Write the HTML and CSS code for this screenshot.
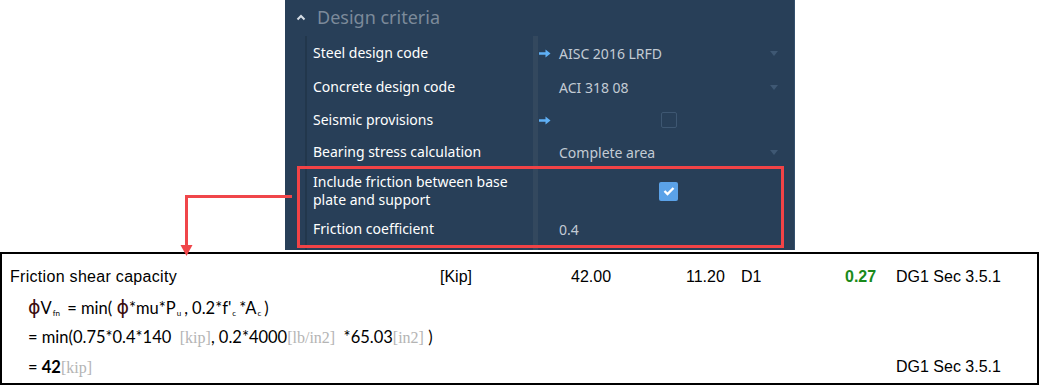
FILE: index.html
```html
<!DOCTYPE html>
<html>
<head>
<meta charset="utf-8">
<link rel="stylesheet" href="styles.css">
</head>
<body>
<div class="page">
  <section class="panel">
    <div class="panel-head">
      <svg class="chev" width="10" height="7" viewBox="0 0 10 7"><path d="M1.5 5.5 L5 2 L8.5 5.5" fill="none" stroke="#d6dde5" stroke-width="2"/></svg>
      <span class="panel-title">Design criteria</span>
    </div>
    <div class="props">
      <div class="label">Steel design code</div>
      <div class="value"><span class="slot"><svg class="arrow" width="12" height="9" viewBox="0 0 12 9"><path d="M0 3.2 H6.5 V0.5 L11.5 4.5 L6.5 8.5 V5.8 H0 Z" fill="#5fb0f5"/></svg></span><span class="vtext">AISC 2016 LRFD</span><span class="caret"></span></div>

      <div class="label">Concrete design code</div>
      <div class="value"><span class="slot"></span><span class="vtext">ACI 318 08</span><span class="caret"></span></div>

      <div class="label">Seismic provisions</div>
      <div class="value"><span class="slot"><svg class="arrow" width="12" height="9" viewBox="0 0 12 9"><path d="M0 3.2 H6.5 V0.5 L11.5 4.5 L6.5 8.5 V5.8 H0 Z" fill="#5fb0f5"/></svg></span><span class="checkwrap"><span class="check"></span></span></div>

      <div class="label">Bearing stress calculation</div>
      <div class="value"><span class="slot"></span><span class="vtext">Complete area</span><span class="caret"></span></div>

      <div class="label two">Include friction between base<br>plate and support</div>
      <div class="value"><span class="slot"></span><span class="checkwrap"><span class="check on"><svg width="12" height="10" viewBox="0 0 12 10"><path d="M1.5 5 L4.5 8 L10.5 2" fill="none" stroke="#fff" stroke-width="2.4"/></svg></span></span></div>

      <div class="label">Friction coefficient</div>
      <div class="value"><span class="slot"></span><span class="vtext">0.4</span></div>
    </div>
  </section>

  <div class="highlight"></div>
  <svg class="connector" width="120" height="70" viewBox="0 0 120 70">
    <path d="M113 6.5 H7.5 V58" fill="none" stroke="#f0464a" stroke-width="3"/>
    <path d="M1.5 55 H13.5 L7.5 66 Z" fill="#f0464a"/>
  </svg>

  <section class="report">
    <div class="rrow">
      <span class="wide">Friction shear capacity</span>
      <span>[Kip]</span>
      <span>42.00</span>
      <span>11.20</span>
      <span>D1</span>
      <span class="ratio">0.27</span>
      <span>DG1 Sec 3.5.1</span>
    </div>
    <div class="rrow">
      <span class="formula"><span class="phi">ϕ</span>V<sub>fn</sub> = min( <span class="phi">ϕ</span>*mu*P<sub>u</sub>, 0.2*f'<sub>c</sub>*A<sub>c</sub>)</span>
    </div>
    <div class="rrow">
      <span class="formula">= min(0.75*0.4*140 &nbsp;<span class="unit">[kip]</span>, 0.2*4000<span class="unit">[lb/in2]</span> &nbsp;*65.03<span class="unit">[in2]</span> )</span>
    </div>
    <div class="rrow">
      <span class="formula">= <b>42</b><span class="unit">[kip]</span></span>
      <span class="ref">DG1 Sec 3.5.1</span>
    </div>
  </section>
</div>
</body>
</html>
```

FILE: styles.css
```css
* { box-sizing: border-box; }
html, body { margin: 0; padding: 0; background: #fff; }
.page { position: relative; width: 1039px; height: 386px; overflow: hidden; }

.panel {
  margin-left: 285px;
  width: 510px;
  height: 250px;
  background: #283f58;
  border-right: 1px solid #34506d;
  display: flex;
  flex-direction: column;
  font-family: "Noto Sans", "Open Sans", sans-serif;
}
.panel-head {
  height: 36px;
  display: flex;
  align-items: center;
  padding-left: 11px;
}
.chev { margin-right: 11px; margin-top: -1px; }
.panel-title { font-size: 18px; color: #7c8a9a; margin-top: -2px; }

.props {
  flex: 1;
  margin-left: 20px;
  border-left: 2px solid #22374c;
  display: grid;
  grid-template-columns: 226px 1fr;
  grid-template-rows: 34px 34px 32px 32px 46px 30px;
  background: linear-gradient(to right, transparent 226px, #33485e 226px, #33485e 231px, transparent 231px);
}
.label {
  color: #ffffff;
  font-size: 14px;
  padding-left: 6px;
  display: flex;
  align-items: center;
  line-height: 18px;
}
.value {
  padding-left: 6px;
  padding-right: 16px;
  display: flex;
  align-items: center;
  color: #c3cbd4;
  font-size: 14px;
}
.slot { width: 20px; display: flex; align-items: center; flex: none; }
.vtext { flex: 1; }
.caret {
  width: 0; height: 0;
  border-left: 4px solid transparent;
  border-right: 4px solid transparent;
  border-top: 5px solid #3f5873;
}
.checkwrap { flex: 1; display: flex; justify-content: center; }
.check {
  width: 16px; height: 16px;
  border: 1px solid #3e5772;
  border-radius: 2px;
  display: flex; align-items: center; justify-content: center;
}
.check.on {
  width: 19px; height: 19px;
  background: #5ba2e8;
  border: none;
}

.highlight {
  position: absolute;
  left: 297px; top: 166px;
  width: 487px; height: 82px;
  border: 3px solid #f24346;
}
.connector {
  position: absolute;
  left: 179px; top: 190px;
}

.report {
  margin-top: 2px;
  width: 1039px;
  height: 133px;
  border: 2px solid #000;
  padding: 8px 0 0 8px;
  font-family: "Liberation Sans", Arial, sans-serif;
  font-size: 16px;
  color: #000;
}
.rrow {
  display: grid;
  grid-template-columns: 430px 131px 115px 55px 104px 51px auto;
  height: 30px;
  align-items: center;
}
.wide { letter-spacing: 0.3px; }
.ratio { color: #1a8a1a; font-weight: bold; }
.formula {
  grid-column: 1 / 7;
  padding-left: 18px;
  font-family: "Lato", "Liberation Sans", sans-serif;
  font-size: 16.5px;
  white-space: nowrap;
}
.ref { grid-column: 7; }
.phi { font-family: "DejaVu Sans", sans-serif; font-size: 19px; color: #3b0d0d; }
sub { font-size: 8px; vertical-align: -2px; margin-right: 3px; margin-left: 1px; }
.unit { font-family: "Liberation Serif", serif; font-size: 16px; color: #b4b4b4; }
```
